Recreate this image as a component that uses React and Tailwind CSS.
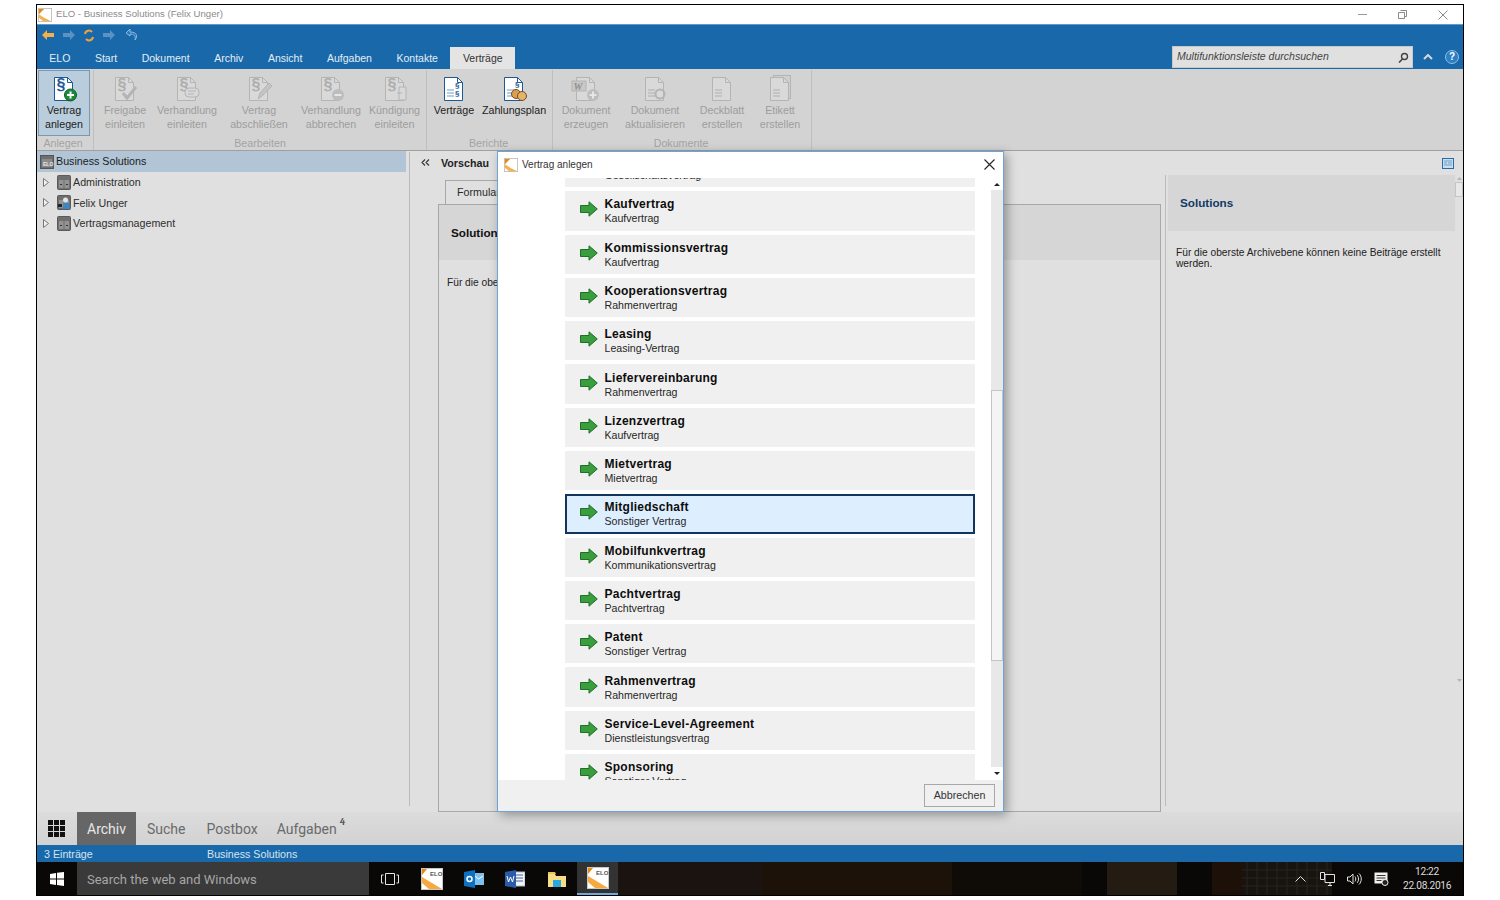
import React from "react";

const ITEMS = [
  ["Kaufvertrag", "Kaufvertrag"],
  ["Kommissionsvertrag", "Kaufvertrag"],
  ["Kooperationsvertrag", "Rahmenvertrag"],
  ["Leasing", "Leasing-Vertrag"],
  ["Liefervereinbarung", "Rahmenvertrag"],
  ["Lizenzvertrag", "Kaufvertrag"],
  ["Mietvertrag", "Mietvertrag"],
  ["Mitgliedschaft", "Sonstiger Vertrag"],
  ["Mobilfunkvertrag", "Kommunikationsvertrag"],
  ["Pachtvertrag", "Pachtvertrag"],
  ["Patent", "Sonstiger Vertrag"],
  ["Rahmenvertrag", "Rahmenvertrag"],
  ["Service-Level-Agreement", "Dienstleistungsvertrag"],
  ["Sponsoring", "Sonstiger Vertrag"],
];

const TABS = ["ELO", "Start", "Dokument", "Archiv", "Ansicht", "Aufgaben", "Kontakte"];

// ribbon document icon, the badge is whatever sits on the lower right corner
const DocIcon = ({ active, badge, lines, mark = "§" }) => {
  const stroke = active ? "#1c5a96" : "#b4b4b4";
  const fill = active ? "#ffffff" : "#d9d9d9";
  const text = active ? "#1c5a96" : "#aeaeae";
  return (
    <svg width="32" height="28" viewBox="0 0 32 28">
      {badge === "stack" && <rect x="9.500" y="0.500" width="17" height="23" fill="#cfcfcf" stroke="#b4b4b4" />}
      <path d="M6.5 2.5h13l5 5v18h-18z" fill={fill} stroke={stroke} />
      <path d="M19.500 2.500v5h5" fill="none" stroke={stroke} />
      {mark && (
        <text x="8.500" y="15" fontSize="16" fontWeight="700" fontFamily="Liberation Sans" fill={text}>
          {mark}
        </text>
      )}
      {lines && <path d="M9 15h7M9 18h7M9 21h7" stroke={active ? "#6d9dc6" : text} />}
      {badge === "plus" && (
        <g>
          <circle cx="22.500" cy="20" r="6" fill={active ? "#1d8a3a" : "#b9b9b9"} stroke={active ? "#0e5c26" : "none"} />
          <path d="M22.500 16.500v7M19 20h7" stroke="#fff" strokeWidth="2" />
        </g>
      )}
      {badge === "check" && <path d="M14 18l4 5 9-11" fill="none" stroke="#b4b4b4" strokeWidth="3" />}
      {badge === "chat" && (
        <g>
          <rect x="14" y="13" width="14" height="9" rx="4" fill="#d9d9d9" stroke="#b4b4b4" />
          <path d="M17 16h8M17 19h6" stroke="#b4b4b4" />
        </g>
      )}
      {badge === "pen" && <path d="M15 24l2-6 9-10 3 3-10 10z" fill="#c4c4c4" stroke="#b4b4b4" />}
      {badge === "minus" && (
        <g>
          <circle cx="23" cy="20" r="6" fill="#bdbdbd" />
          <path d="M19.500 20h7" stroke="#e6e6e6" strokeWidth="2" />
        </g>
      )}
      {badge === "door" && <path d="M20 12h7v13h-7zM18 18h5" fill="#d9d9d9" stroke="#b4b4b4" />}
      {badge === "refresh" && <circle cx="21" cy="19" r="4.500" fill="none" stroke="#b4b4b4" strokeWidth="2" />}
      {badge === "reports" && (
        <text x="17" y="13" fontSize="8" fontWeight="700" fontFamily="Liberation Sans" fill="#1c5a96">§</text>
      )}
      {badge === "reports" && (
        <text x="17" y="21" fontSize="8" fontWeight="700" fontFamily="Liberation Sans" fill="#1c5a96">§</text>
      )}
      {badge === "coins" && (
        <g>
          <text x="17" y="12" fontSize="8" fontWeight="700" fontFamily="Liberation Sans" fill="#1c5a96">§</text>
          <circle cx="18" cy="19" r="4.500" fill="#d8a050" stroke="#7d4a1a" />
          <circle cx="24" cy="21" r="4.500" fill="#e2b46c" stroke="#7d4a1a" />
        </g>
      )}
      {badge === "word" && (
        <g>
          <rect x="2" y="6" width="14" height="10" fill="#c8c8c8" stroke="#b4b4b4" />
          <text x="3.500" y="14.500" fontSize="10" fontWeight="700" fontStyle="italic" fontFamily="Liberation Serif" fill="#8f8f8f">W</text>
          <circle cx="23" cy="20" r="6" fill="#bdbdbd" />
          <path d="M23 16.500v7M19.500 20h7" stroke="#e6e6e6" strokeWidth="2" />
        </g>
      )}
    </svg>
  );
};

const RibbonButton = ({ label, sub, width, icon, active, selected }) => (
  <div
    className={`flex h-[66px] flex-col items-center pt-[4px] ${width} ${selected ? "border border-[#7b98b3] bg-[#b9cddd]" : "border border-transparent"}`}
  >
    <div className="flex h-[28px] items-center">{icon}</div>
    <div className={`mt-[1px] text-center text-[10.7px] leading-[13.500px] whitespace-nowrap ${active ? "text-[#222222]" : "text-[#9d9d9d]"}`}>
      <div>{label}</div>
      {sub && <div>{sub}</div>}
    </div>
  </div>
);

const RibbonGroup = ({ title, className, titleClass, children }) => (
  <div className={`flex h-[80px] flex-col self-start border-r border-[#bfbfbf] ${className}`}>
    <div className="flex h-[66px] items-start">{children}</div>
    <div className={`mt-auto pb-[1px] text-center text-[10.7px] leading-[12px] text-[#a3a3a3] ${titleClass}`}>{title}</div>
  </div>
);

const Folder = ({ user }) => (
  <svg width="14" height="15" viewBox="0 0 14 15" className="shrink-0">
    <rect x="0.500" y="0.500" width="13" height="14" rx="1" fill="#6f6f6f" stroke="#5a5a5a" />
    <rect x="2" y="5" width="4.500" height="8" fill="#939393" />
    <rect x="7.500" y="5" width="4.500" height="8" fill="#939393" />
    <rect x="3" y="9" width="2" height="1" fill="#333" />
    <rect x="9" y="9" width="2" height="1" fill="#333" />
    {user && <circle cx="8.500" cy="5" r="2.500" fill="#e4e4e4" />}
    {user && <path d="M5 14l2-6h5l1 6z" fill="#3d86c6" />}
    {user && <rect x="1" y="9" width="4" height="3" fill="#222" />}
  </svg>
);

const TreeRow = ({ label, user }) => (
  <div className="flex h-[20.500px] items-center pl-[6px] text-[10.7px] text-[#2e2e2e]">
    <svg width="6" height="9" viewBox="0 0 6 9" className="mr-[8px] shrink-0">
      <path d="M.5.5l5 4-5 4z" fill="#f0f0f0" stroke="#777" />
    </svg>
    <Folder user={user} />
    <span className="ml-[2px]">{label}</span>
  </div>
);

const Arrow = () => (
  <svg width="18" height="16" viewBox="0 0 18 16" className="mt-[-3px] shrink-0">
    <path d="M.5 4.500h8.500V.8L17.300 8 9 15.200v-3.700H.5z" fill="#3a9e3f" stroke="#1f6f27" />
  </svg>
);

const ContractItem = ({ title, sub, selected }) => (
  <div
    className={`flex h-[39.290px] shrink-0 items-center ${selected ? "border-2 border-[#12355b] bg-[#ddeeff] pl-[13px]" : "bg-[#f0f0f0] pl-[15px]"}`}
  >
    <Arrow />
    <div className="ml-[6.500px] pt-[1px]">
      <div className="text-[12px] leading-[15px] font-bold tracking-[0.250px] text-[#0d0d0d]">{title}</div>
      <div className="text-[10.600px] leading-[13px] text-[#262626]">{sub}</div>
    </div>
  </div>
);

const EloLogo = ({ size = 16 }) => (
  <svg width={size} height={size} viewBox="0 0 16 16" className="shrink-0">
    <rect x="0.500" y="0.500" width="15" height="15" fill="#ffffff" stroke="#bdbdbd" />
    <path d="M1 1h6L1 7z" fill="#e88a12" />
    <path d="M1 7l6 4 8 4H6L1 11z" fill="#f6b04c" />
  </svg>
);

const TaskElo = () => (
  <svg width="22" height="22" viewBox="0 0 22 22">
    <rect x="0.500" y="0.500" width="21" height="21" fill="#ffffff" stroke="#c9c9c9" />
    <path d="M1 1h5L1 7z" fill="#e88a12" />
    <path d="M1 9l10 6 10 6H8L1 15z" fill="#f5a93f" />
    <text x="9" y="8" fontSize="6" fontWeight="700" fontFamily="Liberation Sans" fill="#555">ELO</text>
  </svg>
);

export default function App() {
  return (
    <div className="h-[900px] w-[1500px] bg-white pt-[4px] pl-[36px] [font-family:'Liberation_Sans',sans-serif]">
      <div className="relative flex h-[892px] w-[1428px] flex-col border border-black bg-[#e0e0e0]">
        {/* title bar */}
        <div className="flex h-[19px] shrink-0 items-center bg-white pl-[1px]">
          <EloLogo size={14} />
          <span className="ml-[4px] text-[9.600px] text-[#8c8c8c]">ELO - Business Solutions (Felix Unger)</span>
          <div className="ml-auto flex items-center gap-[31px] pr-[15px]">
            <div className="h-px w-[9px] bg-[#9a9a9a]" />
            <svg width="9" height="9" viewBox="0 0 9 9">
              <path d="M2.500.5h6v6h-2M.5 2.500h6v6h-6z" fill="none" stroke="#8a8a8a" />
            </svg>
            <svg width="10" height="10" viewBox="0 0 10 10">
              <path d="M.5.5l9 9M9.500.5l-9 9" stroke="#8a8a8a" />
            </svg>
          </div>
        </div>

        {/* quick access + tabs */}
        <div className="flex h-[45px] shrink-0 flex-col border-t border-[#5f9ccb] bg-[#1868aa]">
          <div className="flex h-[20px] items-center gap-[9px] pl-[5px]">
            <svg width="12" height="10" viewBox="0 0 12 10"><path d="M5 0v3h7v4H5v3L0 5z" fill="#f3b04a" /></svg>
            <svg width="12" height="10" viewBox="0 0 12 10"><path d="M7 0v3H0v4h7v3l5-5z" fill="#5b92c2" /></svg>
            <svg width="10" height="13" viewBox="0 0 10 13"><path d="M1 5a4 4 0 0 1 7-2M9 8a4 4 0 0 1-7 2" fill="none" stroke="#f0a33a" strokeWidth="2" /></svg>
            <svg width="13" height="10" viewBox="0 0 13 10"><path d="M7 0v3H0v4h7v3l5-5z" fill="#5b92c2" /></svg>
            <svg width="14" height="14" viewBox="0 0 14 14"><path d="M5 1L1 5l4 3V6c4 0 6 2 5 6 3-4 2-8-5-8z" fill="#2a78b8" stroke="#8fbbe0" /></svg>
          </div>
          <div className="flex h-[24px] items-end">
            <div className="flex items-end">
              {TABS.map((t) => (
                <div key={t} className="flex h-[22px] items-center px-[12.300px] pt-[1px] text-[10.500px] text-[#e4eef6]">{t}</div>
              ))}
              <div className="flex h-[22px] w-[65px] items-center justify-center bg-[#e4e4e4] pt-[1px] text-[10.500px] text-[#333333]">Verträge</div>
            </div>
            <div className="ml-auto flex items-center self-start pr-[4px]">
              <div className="mt-[1px] flex h-[22px] w-[241px] items-center justify-between border border-[#c9c9c9] bg-[#e0e0e0] pr-[3px] pl-[4px] text-[10.500px] text-[#444444] italic">
                Multifunktionsleiste durchsuchen
                <svg width="11" height="11" viewBox="0 0 11 11"><circle cx="6.500" cy="4.500" r="3" fill="none" stroke="#444" strokeWidth="1.400" /><path d="M4.500 7L1 10.500" stroke="#444" strokeWidth="1.600" /></svg>
              </div>
              <svg width="10" height="6" viewBox="0 0 10 6" className="ml-[10px]"><path d="M1 5l4-4 4 4" fill="none" stroke="#d8d8d8" strokeWidth="2" /></svg>
              <div className="ml-[12px] flex h-[14px] w-[14px] items-center justify-center rounded-full border border-[#8fbfe6] bg-[#2d7fc4] text-[10px] font-bold text-white">?</div>
            </div>
          </div>
        </div>

        {/* ribbon */}
        <div className="flex h-[82px] shrink-0 items-start border-b border-[#a0a0a0] bg-[#d3d3d3] pt-[1px] pl-[1px]">
          <RibbonGroup title="Anlegen" className="w-[56px]" titleClass="pr-[5px]">
            <RibbonButton label="Vertrag" sub="anlegen" width="w-[52px]" active selected icon={<DocIcon active badge="plus" />} />
          </RibbonGroup>
          <RibbonGroup title="Bearbeiten" className="w-[333px]">
            <div className="flex">
              <RibbonButton label="Freigabe" sub="einleiten" width="w-[62px]" icon={<DocIcon badge="check" />} />
              <RibbonButton label="Verhandlung" sub="einleiten" width="w-[62px]" icon={<DocIcon badge="chat" />} />
              <RibbonButton label="Vertrag" sub="abschließen" width="w-[82px]" icon={<DocIcon badge="pen" />} />
              <RibbonButton label="Verhandlung" sub="abbrechen" width="w-[62px]" icon={<DocIcon badge="minus" />} />
              <RibbonButton label="Kündigung" sub="einleiten" width="w-[65px]" icon={<DocIcon badge="door" />} />
            </div>
          </RibbonGroup>
          <RibbonGroup title="Berichte" className="w-[126px]" titleClass="pr-[2px]">
            <div className="flex pl-[2px]">
              <RibbonButton label="Verträge" width="w-[50px]" active icon={<DocIcon active lines mark="" badge="reports" />} />
              <RibbonButton label="Zahlungsplan" width="w-[70px]" active icon={<DocIcon active lines mark="" badge="coins" />} />
            </div>
          </RibbonGroup>
          <RibbonGroup title="Dokumente" className="w-[259px]" titleClass="pr-[2px]">
            <div className="flex pl-[2px]">
              <RibbonButton label="Dokument" sub="erzeugen" width="w-[62px]" icon={<DocIcon badge="word" mark="" />} />
              <RibbonButton label="Dokument" sub="aktualisieren" width="w-[76px]" icon={<DocIcon badge="refresh" mark="" lines />} />
              <RibbonButton label="Deckblatt" sub="erstellen" width="w-[58px]" icon={<DocIcon mark="" lines />} />
              <RibbonButton label="Etikett" sub="erstellen" width="w-[58px]" icon={<DocIcon mark="" lines badge="stack" />} />
            </div>
          </RibbonGroup>
        </div>

        {/* main area */}
        <div className="flex min-h-0 flex-1 bg-[#e0e0e0]">
          <div className="w-[369px] shrink-0">
            <div className="flex h-[21px] items-center bg-[#b1c5d7] pl-[3px] text-[10.7px] text-[#1c1c1c]">
              <svg width="14" height="14" viewBox="0 0 14 14" className="mr-[2px]">
                <rect x="0.500" y="0.500" width="13" height="13" fill="#6f6f6f" stroke="#555" />
                <rect x="2" y="4" width="10" height="8" fill="#8b8b8b" />
                <text x="3" y="10.500" fontSize="5" fontWeight="700" fontFamily="Liberation Sans" fill="#e8e8e8">ELO</text>
              </svg>
              Business Solutions
            </div>
            <div>
              <TreeRow label="Administration" />
              <TreeRow label="Felix Unger" user />
              <TreeRow label="Vertragsmanagement" />
            </div>
          </div>
          <div className="mt-[1px] mb-[6px] ml-[3px] w-px shrink-0 bg-[#bcbcbc]" />
          <div className="flex w-[755px] shrink-0 flex-col">
            <div className="flex h-[29px] shrink-0 items-center pb-[4px] pl-[11px] text-[10.7px] font-bold text-[#1e1e1e]">
              <svg width="9" height="7" viewBox="0 0 9 7" className="mb-[2px] shrink-0">
                <path d="M4 .5L1 3.500l3 3M8 .5L5 3.500l3 3" fill="none" stroke="#333" strokeWidth="1.100" />
              </svg>
              <span className="ml-[11px]">Vorschau</span>
            </div>
            <div className="ml-[35px] flex h-[24px] w-[80px] shrink-0 items-center border-x border-t border-[#a8a8a8] pl-[11px] text-[10.7px] text-[#2a2a2a]">Formular</div>
            <div className="mr-[4px] ml-[28px] flex min-h-0 flex-1 flex-col border border-[#a8a8a8]">
              <div className="flex h-[55px] shrink-0 items-center bg-[#d6d6d6] pl-[12px] text-[11.700px] font-bold text-[#111111]">Solutions</div>
              <div className="pt-[17px] pl-[8px] text-[10.200px] leading-[12px] text-[#222222]">Für die oberste Archivebene können keine Beiträge erstellt werden.</div>
            </div>
          </div>
          <div className="flex min-w-0 flex-1 flex-col">
            <div className="flex h-[24px] shrink-0 items-center justify-end pr-[9px]">
              <svg width="12" height="11" viewBox="0 0 12 11">
                <rect x="0.500" y="0.500" width="11" height="10" fill="#c9dff0" stroke="#2a6ca5" />
                <path d="M2 3h8M2 5h3M6 5h4M2 7h8" stroke="#6d9dc6" />
              </svg>
            </div>
            <div className="flex min-h-0 flex-1">
              <div className="mb-[6px] w-px shrink-0 bg-[#bcbcbc]" />
              <div className="ml-[2px] w-[287px] shrink-0">
                <div className="flex h-[56px] items-center bg-[#d6d6d6] pl-[12px] text-[11.700px] font-bold text-[#123a66]">Solutions</div>
                <div className="px-[8px] pt-[16px] text-[10.200px] leading-[11px] text-[#222222]">Für die oberste Archivebene können keine Beiträge erstellt werden.</div>
              </div>
              <div className="relative flex-1">
                <svg width="5" height="3" viewBox="0 0 5 3" className="absolute top-[2px] left-[2px]"><path d="M2.500 0L5 3H0z" fill="#b5b5b5" /></svg>
                <div className="absolute top-[7px] left-0 h-[15px] w-full border border-[#c4c4c4] bg-[#e8e8e8]" />
                <svg width="5" height="3" viewBox="0 0 5 3" className="absolute top-[504px] left-[2px]"><path d="M2.500 3L5 0H0z" fill="#b5b5b5" /></svg>
              </div>
            </div>
          </div>
        </div>

        {/* bottom nav */}
        <div className="flex h-[33px] shrink-0 items-stretch bg-gradient-to-b from-[#dcdcdc] to-[#d2d2d2] [font-family:'Roboto',sans-serif] text-[14px] text-[#6a6a6a]">
          <div className="flex w-[39px] items-center justify-center">
            <div className="grid grid-cols-3 gap-[1.500px]">
              {[0, 1, 2, 3, 4, 5, 6, 7, 8].map((i) => (
                <div key={i} className="h-[4.500px] w-[4.500px] bg-[#111111]" />
              ))}
            </div>
          </div>
          <div className="ml-[1px] flex w-[59px] items-center justify-center bg-[#666666] pt-[2px] text-[#e8e8e8]">Archiv</div>
          <div className="flex items-center pt-[2px] pl-[11px]">Suche</div>
          <div className="flex items-center pt-[2px] pl-[21px]">Postbox</div>
          <div className="flex items-center pt-[2px] pl-[19px]">Aufgaben</div>
          <div className="ml-[3px] pt-[3px] font-serif text-[10px] leading-[14px] font-bold text-[#555555]">4</div>
        </div>

        {/* status bar */}
        <div className="flex h-[17px] shrink-0 items-center bg-[#1868aa] pt-[1px] text-[10.7px] text-[#d5e4f1]">
          <span className="w-[170px] pl-[7px]">3 Einträge</span>
          <span>Business Solutions</span>
        </div>

        {/* windows taskbar */}
        <div className="relative flex h-[33px] shrink-0 items-stretch overflow-hidden bg-[#0a0807] [font-family:'Roboto',sans-serif]">
          <svg className="absolute top-0 left-[565px]" width="863" height="33" viewBox="0 0 863 33">
            <rect x="0" y="0" width="160" height="33" fill="#1a1310" />
            <rect x="160" y="0" width="190" height="33" fill="#1c1209" />
            <rect x="350" y="0" width="130" height="33" fill="#0f0b07" />
            <rect x="505" y="0" width="70" height="33" fill="#241b12" />
            <rect x="610" y="0" width="30" height="33" fill="#1d1008" />
            <rect x="640" y="0" width="90" height="33" fill="#17130f" />
            <path d="M645 0v33M655 0v33M665 0v33M675 0v33M685 0v33M695 0v33M705 0v33M715 0v33M725 0v33M640 8h90M640 16h90M640 24h90" stroke="#2a2521" />
          </svg>
          <div className="relative flex w-[40px] items-center justify-center">
            <svg width="14" height="14" viewBox="0 0 14 14">
              <path d="M0 2l6-1v5.500H0zM7 .8L14 0v6.500H7zM0 7.500h6V13l-6-1zM7 7.500h7V14l-7-1z" fill="#ffffff" />
            </svg>
          </div>
          <div className="relative flex w-[292px] items-center bg-[#3a3a3a] pt-[3px] pl-[10px] text-[13px] text-[#a6a6a6]">Search the web and Windows</div>
          <div className="relative flex items-center">
            <div className="flex w-[42px] justify-center">
              <svg width="18" height="12" viewBox="0 0 18 12">
                <path d="M4.500.5h9v11h-9zM2.500 2H.5v8h2M15.500 2h2v8h-2" fill="none" stroke="#e6e6e6" />
              </svg>
            </div>
            <div className="flex w-[42px] justify-center"><TaskElo /></div>
            <div className="flex w-[41px] justify-center">
              <svg width="20" height="18" viewBox="0 0 20 18">
                <rect x="9" y="3" width="11" height="12" fill="#7cc0ee" />
                <path d="M11 6l3.500 3L19 6" fill="none" stroke="#fff" />
                <path d="M0 2l11-2v18L0 16z" fill="#0f70c2" />
                <circle cx="5.500" cy="9" r="2.500" fill="none" stroke="#fff" strokeWidth="1.500" />
              </svg>
            </div>
            <div className="flex w-[42px] justify-center">
              <svg width="20" height="18" viewBox="0 0 20 18">
                <rect x="9" y="2" width="11" height="14" fill="#f4f4f4" stroke="#aab9d4" />
                <path d="M11 5h7M11 8h7M11 11h7" stroke="#3a63ad" />
                <path d="M0 2l11-2v18L0 16z" fill="#2a5ba8" />
                <path d="M2 6l1.500 6 2-5 2 5L9 6" fill="none" stroke="#fff" />
              </svg>
            </div>
            <div className="flex w-[41px] justify-center">
              <svg width="20" height="16" viewBox="0 0 20 16">
                <path d="M1 3h7l1 2h10v11H1z" fill="#f7dd85" />
                <path d="M1 1h7l1 2H1z" fill="#e8c558" />
                <rect x="6" y="9" width="8" height="7" fill="#28a8e0" />
              </svg>
            </div>
            <div className="flex h-[33px] w-[41px] items-center justify-center border-b-2 border-[#6fa9dc] bg-[#333333]"><TaskElo /></div>
          </div>
          <div className="relative ml-auto flex items-center text-[#dddddd]">
            <svg width="11" height="7" viewBox="0 0 11 7" className="mr-[14px]"><path d="M.5 6.500l5-5 5 5" fill="none" stroke="#e0e0e0" /></svg>
            <svg width="15" height="14" viewBox="0 0 15 14" className="mr-[12px]"><path d="M5 2.500h9.500v8h-9.500zM8 13.500h4M10 10.500v3M.5.500h4v7h-4z" fill="#0a0807" stroke="#e0e0e0" /></svg>
            <svg width="15" height="12" viewBox="0 0 15 12" className="mr-[12px]"><path d="M.5 4h2.500l3-3v10l-3-3H.5zM8 3.500c1 1.500 1 3.500 0 5M10 2c2 2 2 6 0 8M12 .5c3 3 3 8 0 11" fill="none" stroke="#e0e0e0" /></svg>
            <svg width="15" height="14" viewBox="0 0 15 14" className="mr-[14px]"><path d="M.5.500h13v11h-13z" fill="#f0f0f0" /><path d="M2.500 3.500h9M2.500 6h9M2.500 8.500h5" stroke="#333" /><circle cx="11" cy="10.500" r="3" fill="#222" stroke="#eee" /></svg>
            <div className="w-[60px] pr-[12px] text-center text-[10.200px] leading-[14px] tracking-[-0.300px]">
              <div>12:22</div>
              <div>22.08.2016</div>
            </div>
          </div>
        </div>

        {/* dialog over the main area */}
        <div className="absolute top-[146px] left-[460px] flex h-[661px] w-[507px] flex-col border border-[#6aa4d8] bg-white shadow-[3px_3px_10px_rgba(0,0,0,0.35)]">
          <div className="flex h-[26px] shrink-0 items-center pr-[8px] pb-[1px] pl-[6px]">
            <EloLogo size={14} />
            <span className="ml-[4px] text-[10px] text-[#333333]">Vertrag anlegen</span>
            <svg width="11" height="11" viewBox="0 0 11 11" className="ml-auto">
              <path d="M.5.500l10 10M10.500.500l-10 10" stroke="#222222" strokeWidth="1.100" />
            </svg>
          </div>
          <div className="flex min-h-0 flex-1">
            <div className="min-w-0 flex-1 overflow-hidden pr-[16px] pl-[67px]">
              <div className="mt-[-30px] flex flex-col gap-[4px]">
                <ContractItem title="Gesellschaftsvertrag" sub="Gesellschaftsvertrag" />
                {ITEMS.map(([title, sub]) => (
                  <ContractItem key={title} title={title} sub={sub} selected={title === "Mitgliedschaft"} />
                ))}
              </div>
            </div>
            <div className="flex w-[12px] shrink-0 flex-col">
              <div className="flex h-[12px] items-center justify-center">
                <svg width="6" height="3" viewBox="0 0 6 3"><path d="M3 0l3 3H0z" fill="#222" /></svg>
              </div>
              <div className="flex-1 bg-[#e8e8e8] pt-[200px] pb-[106px]">
                <div className="h-full w-full border border-[#c4c4c4] bg-[#f4f4f4]" />
              </div>
              <div className="flex h-[13px] items-center justify-center">
                <svg width="6" height="3" viewBox="0 0 6 3"><path d="M3 3l3-3H0z" fill="#222" /></svg>
              </div>
            </div>
          </div>
          <div className="flex h-[31px] shrink-0 items-center justify-end bg-[#f0f0f0] pr-[8px]">
            <div className="flex h-[23px] w-[71px] items-center justify-center border border-[#a8a8a8] text-[10.700px] text-[#333333]">Abbrechen</div>
          </div>
        </div>
      </div>
    </div>
  );
}
